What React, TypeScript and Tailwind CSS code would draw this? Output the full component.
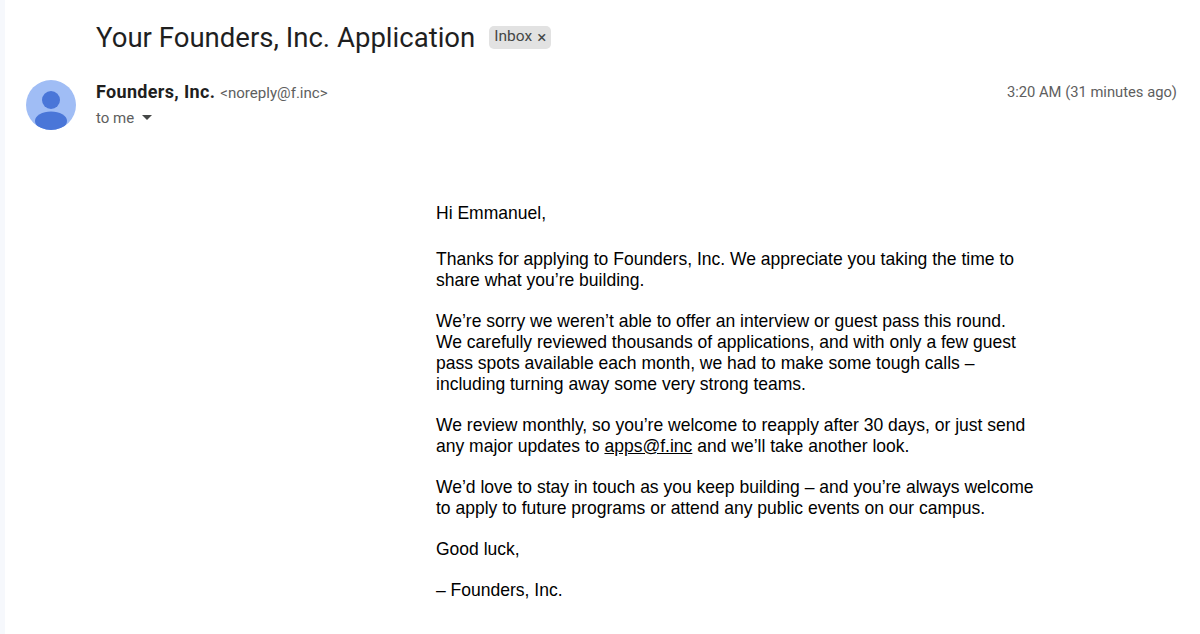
import React from "react";

function Avatar() {
  return (
    <svg width="50" height="50" viewBox="0 0 50 50" className="shrink-0">
      <defs>
        <clipPath id="avatar-clip">
          <circle cx="25" cy="25" r="25" />
        </clipPath>
      </defs>
      <circle cx="25" cy="25" r="25" fill="#a0bdf5" />
      <g clipPath="url(#avatar-clip)">
        <circle cx="25" cy="20" r="9" fill="#4a76d8" />
        <ellipse cx="25" cy="41" rx="16" ry="9.5" fill="#4a76d8" />
      </g>
    </svg>
  );
}

export default function App() {
  return (
    <div className="h-[634px] w-[1200px] overflow-hidden bg-white font-['Roboto',sans-serif]">
      <div className="h-full border-l-[5px] border-[#f6f8fc] pl-[21px]">
        {/*Subject*/}
        <div className="flex items-center pl-[70px] pt-[20px]">
          <h1 className="text-[27.55px] leading-[36px] text-[#1f1f1f]">
            Your Founders, Inc. Application
          </h1>
          <span className="mb-[2px] ml-[14px] flex h-[23px] items-center rounded-[5px] bg-[#e2e2e2] px-[5px] text-[15.5px] text-[#444746]">
            Inbox
            <span className="ml-[5px] text-[17px] leading-none">×</span>
          </span>
        </div>

        {/*Sender*/}
        <div className="mt-[24px] flex items-start pr-[23px]">
          <Avatar />
          <div className="ml-[20px] flex-1">
            <div className="flex items-baseline justify-between">
              <div className="flex items-baseline gap-[5px]">
                <span className="text-[18px] font-bold leading-[24px] tracking-[0.33px] text-[#1f1f1f]">
                  Founders, Inc.
                </span>
                <span className="text-[15.1px] text-[#5e5e5e]">
                  &lt;noreply@f.inc&gt;
                </span>
              </div>
              <span className="-translate-y-px text-[14.75px] text-[#5e5e5e]">
                3:20 AM (31 minutes ago)
              </span>
            </div>
            <div className="mt-[1px] flex items-center text-[15px] leading-[24px] text-[#5e5e5e]">
              to me
              <svg width="10" height="5" viewBox="0 0 10 5" className="ml-[8px]">
                <path d="M0 0h10L5 5z" fill="#444746" />
              </svg>
            </div>
          </div>
        </div>

        {/*Body*/}
        <div className="ml-[410px] mt-[73px] flex w-[620px] flex-col gap-[20px] font-['Liberation_Sans',sans-serif] text-[17.53px] leading-[21px] text-black">
          <p className="mb-[5px]">Hi Emmanuel,</p>
          <p>
            Thanks for applying to Founders, Inc. We appreciate you taking the time to
            <br />
            share what you’re building.
          </p>
          <p>
            We’re sorry we weren’t able to offer an interview or guest pass this round.
            <br />
            We carefully reviewed thousands of applications, and with only a few guest
            <br />
            pass spots available each month, we had to make some tough calls –
            <br />
            including turning away some very strong teams.
          </p>
          <p>
            We review monthly, so you’re welcome to reapply after 30 days, or just send
            <br />
            any major updates to <span className="underline">apps@f.inc</span> and we’ll
            take another look.
          </p>
          <p>
            We’d love to stay in touch as you keep building – and you’re always welcome
            <br />
            to apply to future programs or attend any public events on our campus.
          </p>
          <p>Good luck,</p>
          <p>– Founders, Inc.</p>
        </div>
      </div>
    </div>
  );
}
